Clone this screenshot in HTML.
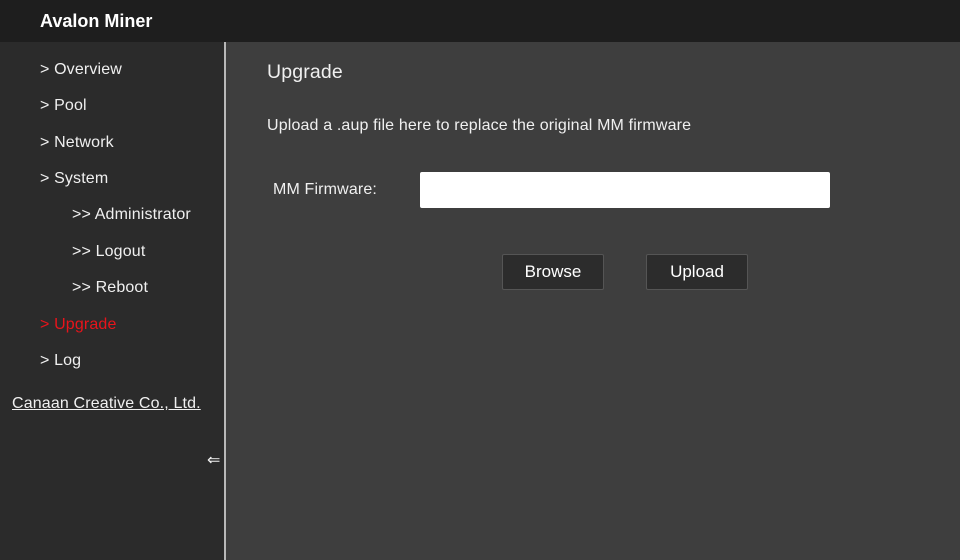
<!DOCTYPE html>
<html><head><style>
body{margin:0;width:960px;height:560px;overflow:hidden;background:#3d3d3d;font-family:"Liberation Sans",sans-serif;color:#fff;position:relative}
.hdr{position:absolute;left:0;top:0;width:960px;height:42px;background:#1e1e1e}
.hdr b{position:absolute;left:40px;top:11px;font-size:18px}
.side{position:absolute;left:0;top:42px;width:224px;height:518px;background:#2b2b2b;border-right:2px solid #b8b8b8}
.it{position:absolute;font-size:16px;color:#f0f0f0;letter-spacing:0.15px;top:1px}
.main{position:absolute;left:226px;top:42px;right:0;bottom:0;background:#3e3e3e}
.btn{position:absolute;top:254px;width:100px;height:34px;background:#2c2c2c;border:1px solid #555;border-radius:2px;font-size:17px;text-align:center;line-height:34px}
</style></head><body>
<div class="hdr"><b>Avalon Miner</b></div>
<div class="side">
<div class="it" style="left:40px;top:19px">&gt; Overview</div>
<div class="it" style="left:40px;top:55px">&gt; Pool</div>
<div class="it" style="left:40px;top:92px">&gt; Network</div>
<div class="it" style="left:40px;top:128px">&gt; System</div>
<div class="it" style="left:72px;top:164px">&gt;&gt; Administrator</div>
<div class="it" style="left:72px;top:201px">&gt;&gt; Logout</div>
<div class="it" style="left:72px;top:237px">&gt;&gt; Reboot</div>
<div class="it" style="left:40px;top:274px;color:#e8141b">&gt; Upgrade</div>
<div class="it" style="left:40px;top:310px">&gt; Log</div>
<div class="it" style="left:12px;top:353px;text-decoration:underline">Canaan Creative Co., Ltd.</div>
<div class="it" style="left:207px;top:408px;font-size:16px">⇐</div>
</div>
<div class="main"></div>
<div class="it" style="left:267px;top:61px;font-size:19.5px">Upgrade</div>
<div class="it" style="left:267px;top:117px">Upload a .aup file here to replace the original MM firmware</div>
<div class="it" style="left:273px;top:181px">MM Firmware:</div>
<div style="position:absolute;left:420px;top:172px;width:410px;height:36px;background:#fff;border-radius:2px"></div>
<div class="btn" style="left:502px">Browse</div>
<div class="btn" style="left:646px">Upload</div>
</body></html>
